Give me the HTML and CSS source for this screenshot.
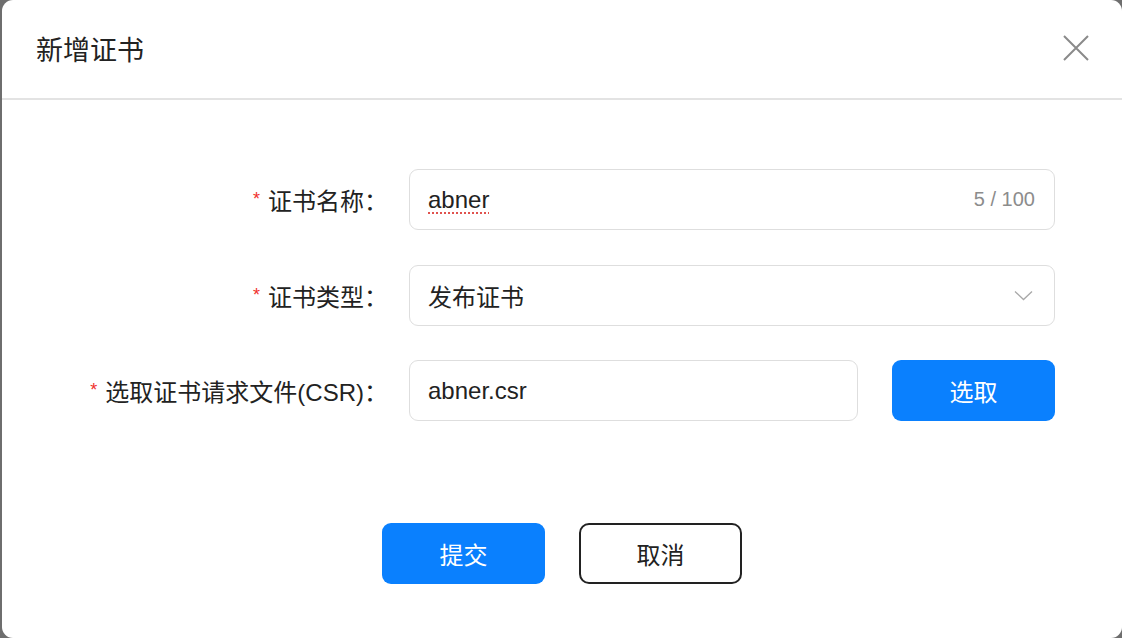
FILE: index.html
```html
<!DOCTYPE html>
<html lang="zh-CN">
<head>
<meta charset="utf-8">
<title>新增证书</title>
<link rel="stylesheet" href="styles.css">
</head>
<body>
<div class="modal">
  <div class="header">
    <div class="title">新增证书</div>
    <svg class="close" width="26" height="26" viewBox="0 0 26 26"><path d="M1 1L25 25M25 1L1 25" stroke="#8a8a8a" stroke-width="2" fill="none"/></svg>
  </div>
  <div class="form">
    <div class="row">
      <div class="label"><span class="star">*</span>证书名称：</div>
      <div class="field wide">
        <span class="value spell">abner</span>
        <span class="count">5 / 100</span>
      </div>
    </div>
    <div class="row">
      <div class="label"><span class="star">*</span>证书类型：</div>
      <div class="field wide">
        <span class="value">发布证书</span>
        <svg class="chev" width="19" height="11" viewBox="0 0 19 11"><path d="M1 1.5L9.5 9.5L18 1.5" stroke="#a8a8a8" stroke-width="1.3" fill="none"/></svg>
      </div>
    </div>
    <div class="row">
      <div class="label"><span class="star">*</span>选取证书请求文件(CSR)：</div>
      <div class="field narrow">
        <span class="value">abner.csr</span>
      </div>
      <div class="btn primary pick">选取</div>
    </div>
  </div>
  <div class="actions">
    <div class="btn primary">提交</div>
    <div class="btn outline">取消</div>
  </div>
</div>
</body>
</html>
```

FILE: styles.css
```css
* { box-sizing: border-box; }
html, body { margin: 0; padding: 0; }
body {
  width: 1122px;
  height: 638px;
  background: #6e6e6e;
  overflow: hidden;
  font-family: "Liberation Sans", "Noto Sans CJK SC", sans-serif;
  color: #222;
}
.modal {
  margin-left: 2px;
  width: 1120px;
  height: 638px;
  background: #fff;
  border-radius: 11px;
  display: flex;
  flex-direction: column;
}
.header {
  height: 100px;
  border-bottom: 2px solid #e3e3e3;
  display: flex;
  align-items: center;
  justify-content: space-between;
  padding: 0 33px 2px 34px;
}
.title {
  font-size: 27px;
  color: #222;
}
.close { display: block; }
.form {
  padding-top: 69px;
  display: flex;
  flex-direction: column;
  gap: 34.5px;
}
.row {
  display: flex;
  align-items: center;
  height: 61px;
}
.label {
  width: 386px;
  text-align: right;
  font-size: 24px;
  color: #222;
  margin-right: 21px;
  white-space: nowrap;
}
.star {
  color: #f0302c;
  font-size: 18px;
  margin-right: 8px;
  position: relative;
  top: -5px;
}
.field {
  height: 61px;
  border: 1.5px solid #dedede;
  border-radius: 9px;
  display: flex;
  align-items: center;
  justify-content: space-between;
  padding: 0 19px 0 18px;
  font-size: 24px;
  color: #222;
}
.wide { width: 646px; }
.narrow { width: 449px; }
.spell {
  text-decoration: underline dotted #e0524e;
  text-decoration-thickness: 2px;
  text-underline-offset: 5px;
}
.count {
  font-size: 20px;
  color: #8c8c8c;
}
.chev { display: block; margin-right: 2px; }
.btn {
  width: 163px;
  height: 61px;
  border-radius: 9px;
  display: flex;
  align-items: center;
  justify-content: center;
  font-size: 24px;
}
.primary {
  background: #0a80fe;
  color: #fff;
}
.pick { margin-left: 34px; }
.outline {
  background: #fff;
  border: 2px solid #222;
  color: #222;
  border-radius: 10px;
}
.actions {
  margin-top: 102px;
  display: flex;
  justify-content: center;
  gap: 34px;
}
```
